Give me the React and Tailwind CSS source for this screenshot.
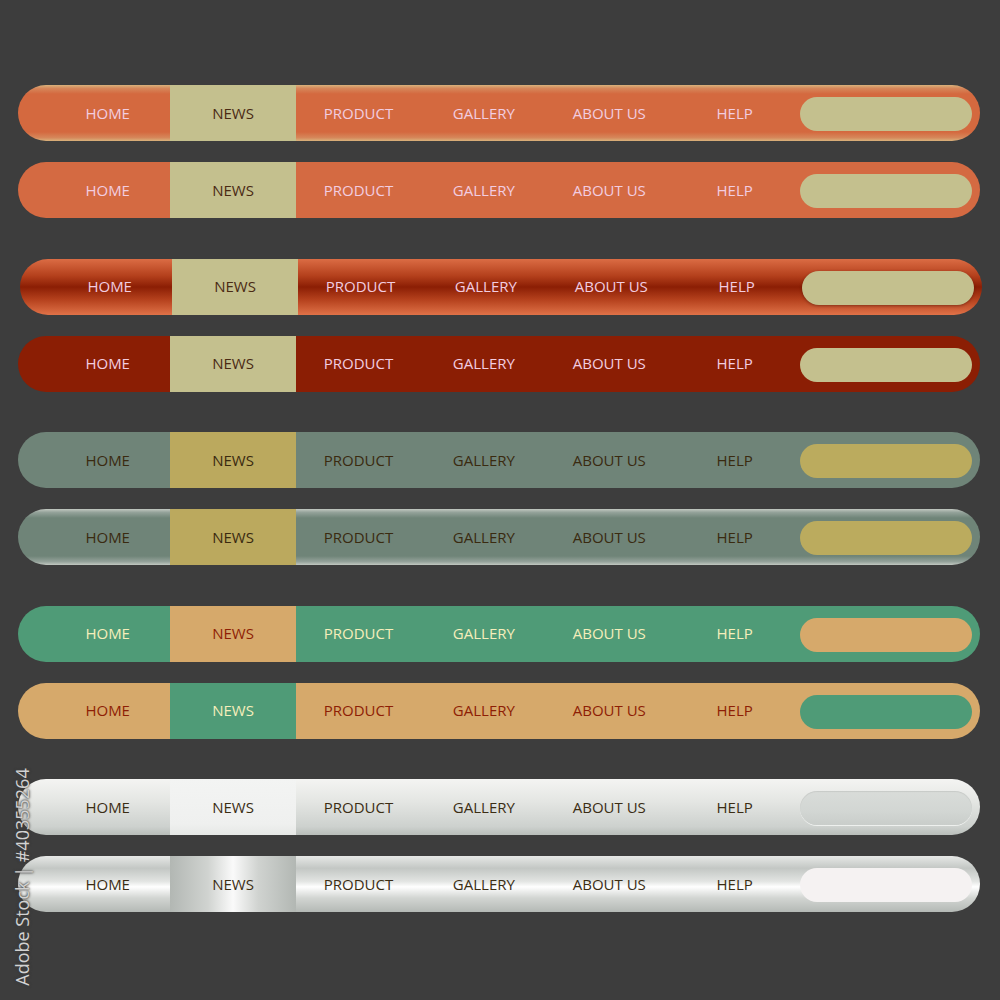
import React from 'react';

const labels = ['HOME', 'NEWS', 'PRODUCT', 'GALLERY', 'ABOUT US', 'HELP'];

// one entry per bar, top to bottom
const bars = [
  {
    bar: 'bg-[linear-gradient(to_bottom,#d9b27c_0%,#d6875a_6%,#d4693f_16%,#d4693f_84%,#d6875a_94%,#d9b27c_100%)]',
    news: 'bg-[#c4c08e]',
    text: 'text-[#f2cde0]',
    newsText: 'text-[#4a2a14]',
    pill: 'bg-[#c4c08e]',
  },
  {
    bar: 'bg-[#d46a42]',
    news: 'bg-[#c4c08e]',
    text: 'text-[#f2cde0]',
    newsText: 'text-[#4a2a14]',
    pill: 'bg-[#c4c08e]',
  },
  {
    bar: 'bg-[linear-gradient(to_bottom,#db6c44_0%,#b4401c_30%,#8b1e04_50%,#b4401c_72%,#e07248_100%)] ml-[2px]',
    news: 'bg-[#c4c08e]',
    text: 'text-[#f2cde0]',
    newsText: 'text-[#4a2a14]',
    pill: 'bg-[#c4c08e] shadow-[0_1px_3px_rgba(60,10,0,0.45)]',
  },
  {
    bar: 'bg-[#8b1e04]',
    news: 'bg-[#c4c08e]',
    text: 'text-[#f2cde0]',
    newsText: 'text-[#4a2a14]',
    pill: 'bg-[#c4c08e]',
  },
  {
    bar: 'bg-[#6f8478]',
    news: 'bg-[#bba95e]',
    text: 'text-[#3a2a10]',
    newsText: 'text-[#3a2a10]',
    pill: 'bg-[#bbab5e]',
  },
  {
    bar: 'bg-[linear-gradient(to_bottom,#c2c8c1_0%,#94a29a_6%,#6f8478_16%,#6f8478_84%,#94a29a_94%,#c2c8c1_100%)]',
    news: 'bg-[#bba95e]',
    text: 'text-[#3a2a10]',
    newsText: 'text-[#3a2a10]',
    pill: 'bg-[#bbab5e]',
  },
  {
    bar: 'bg-[#4f9b77]',
    news: 'bg-[#d6a96b]',
    text: 'text-[#f5eebb]',
    newsText: 'text-[#8e1e05]',
    pill: 'bg-[#d6a96b]',
  },
  {
    bar: 'bg-[#d6a96b]',
    news: 'bg-[#4f9b77]',
    text: 'text-[#8e1e05]',
    newsText: 'text-[#f5eebb]',
    pill: 'bg-[#4f9b77]',
  },
  {
    bar: 'bg-[linear-gradient(to_bottom,#f4f4f2_0%,#e4e6e3_40%,#cdd1ce_85%,#b9beba_100%)]',
    news: 'bg-[linear-gradient(to_bottom,#f3f4f3_0%,#eff0ef_80%,#e6e8e6_100%)]',
    text: 'text-[#3b2d14]',
    newsText: 'text-[#3b2d14]',
    pill: 'bg-[linear-gradient(to_bottom,#d9dcd9_0%,#d2d6d3_60%,#c9cdca_100%)] shadow-[0_1px_0_#eef0ee,inset_0_1px_1px_rgba(0,0,0,0.08)]',
  },
  {
    bar: 'bg-[linear-gradient(to_bottom,#e6e8e6_0%,#c3c7c4_22%,#e2e4e2_45%,#ffffff_55%,#d2d5d2_75%,#b4b9b5_100%)]',
    news: 'bg-[linear-gradient(to_right,#b2b7b3_0%,#d0d3d0_30%,#fafafa_50%,#d0d3d0_70%,#b2b7b3_100%)]',
    text: 'text-[#3b2d14]',
    newsText: 'text-[#3b2d14]',
    pill: 'bg-[#f5f2f2]',
  },
];

const NavBar = ({ cfg }) => (
  <div className={`flex h-[56px] w-[962px] rounded-full overflow-hidden pl-[27px] pr-[8px] ${cfg.bar}`}>
    {labels.map((label) => {
      const active = label === 'NEWS';
      return (
        <div
          key={label}
          className={`w-[125.4px] shrink-0 flex items-center justify-center text-[15px] ${
            active ? `${cfg.news} ${cfg.newsText}` : cfg.text
          }`}
        >
          {label}
        </div>
      );
    })}
    <div className={`flex-1 ml-[3px] h-[34px] self-center mt-[2px] rounded-full ${cfg.pill}`} />
  </div>
);

export default function App() {
  const pairs = [bars.slice(0, 2), bars.slice(2, 4), bars.slice(4, 6), bars.slice(6, 8), bars.slice(8, 10)];

  return (
    <div
      className="relative w-[1000px] h-[1000px] bg-[#3d3d3d] pt-[85px] pl-[18px] flex flex-col gap-[40.5px]"
      style={{ fontFamily: '"Open Sans", "Liberation Sans", sans-serif' }}
    >
      {pairs.map((pair, i) => (
        <div key={i} className="flex flex-col gap-[21px]">
          {pair.map((cfg, j) => (
            <NavBar key={j} cfg={cfg} />
          ))}
        </div>
      ))}

      {/* vertical stock id along the left edge */}
      <div className="absolute z-10 left-[22px] top-[877px] -translate-x-1/2 -translate-y-1/2 -rotate-90 whitespace-nowrap text-[18px] text-[#d2d2d2] leading-none [text-shadow:0_0_2px_#3d3d3d,0_0_3px_#3d3d3d]">
        Adobe Stock | #40355264
      </div>
    </div>
  );
}
